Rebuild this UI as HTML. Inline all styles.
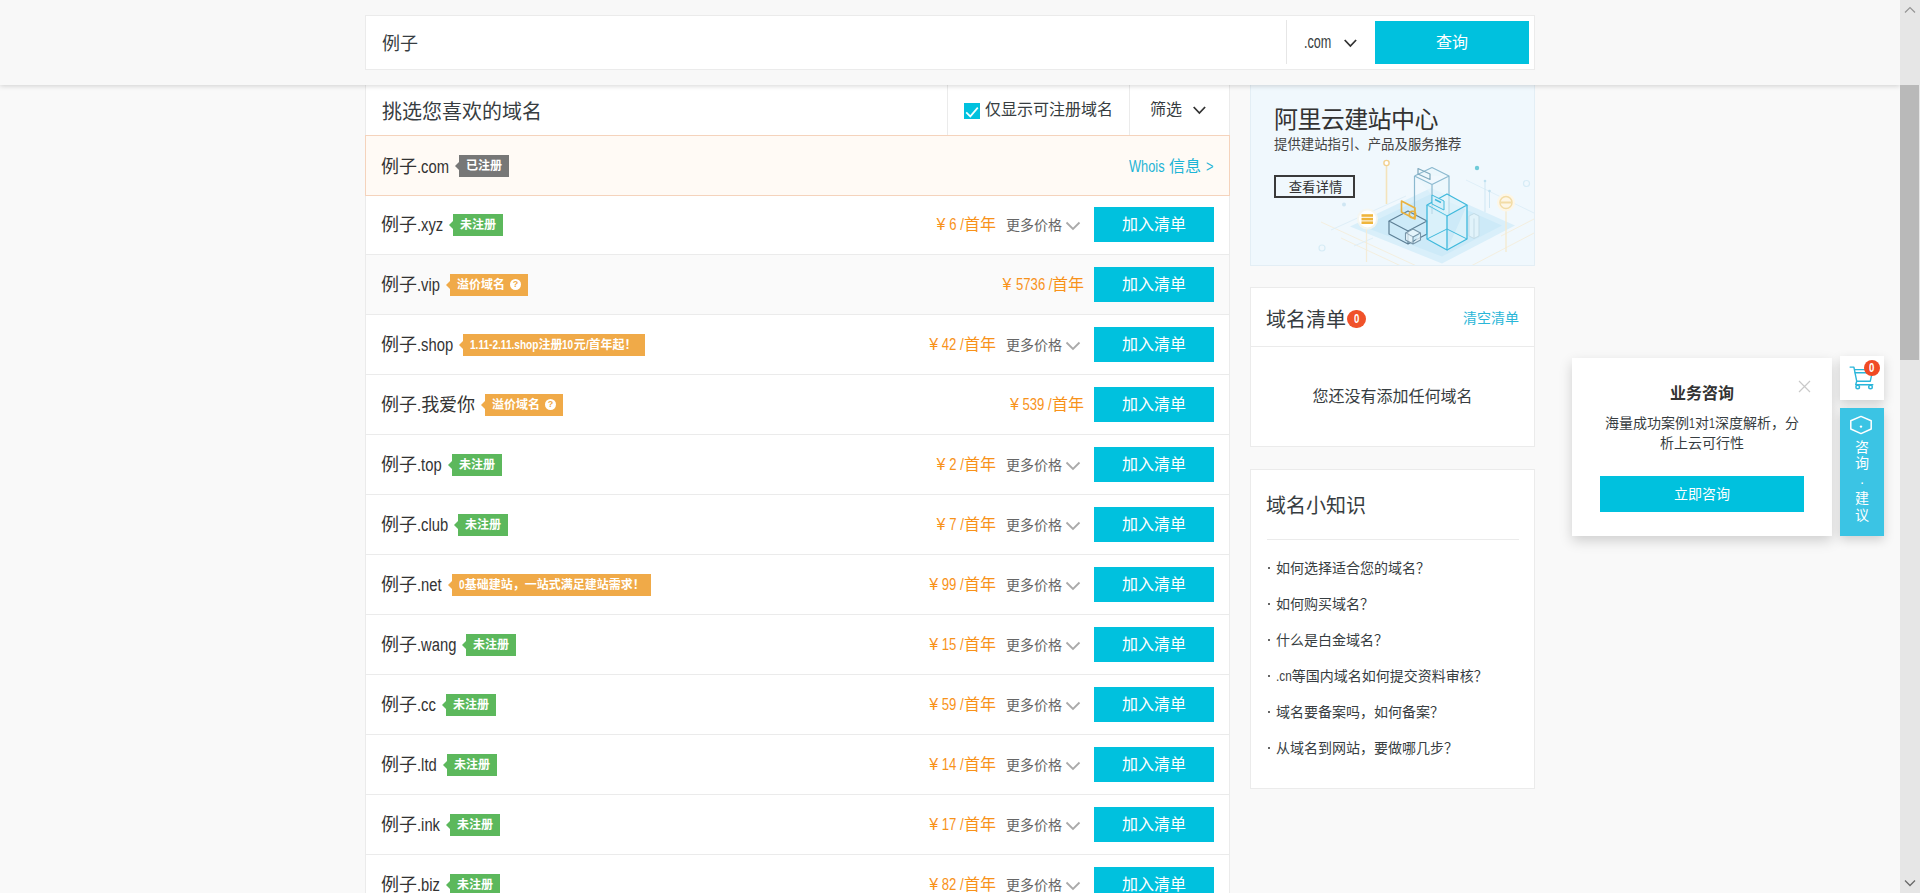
<!DOCTYPE html>
<html lang="zh-CN">
<head>
<meta charset="utf-8">
<title>域名查询</title>
<style>
*{box-sizing:border-box;margin:0;padding:0}
html,body{width:1920px;height:893px;overflow:hidden}
body{background:#f9f9f9;font-family:"Liberation Sans","Noto Sans CJK SC",sans-serif;color:#373d41;position:relative;font-size:14px}
.abs{position:absolute}
/* condensed latin helper */
.c{display:inline-block;transform:scaleX(.76);transform-origin:0 50%;white-space:nowrap}
.cr{display:inline-block;transform:scaleX(.76);transform-origin:100% 50%;white-space:nowrap}

/* header */
#hdr{position:absolute;left:0;top:0;width:1900px;height:85px;background:#f8f8f8;box-shadow:0 1px 5px rgba(0,0,0,.17);z-index:10}
#sbox{position:absolute;left:365px;top:15px;width:1170px;height:55px;background:#fff;border:1px solid #ebebeb}
#sbox .kw{position:absolute;left:16px;top:0;line-height:56px;font-size:18px;color:#373d41}
#sbox .div{position:absolute;left:920px;top:4px;width:1px;height:44px;background:#e6e6e6}
#sbox .tld{position:absolute;left:938px;top:0;line-height:53px;font-size:18px;color:#373d41}
#sbox .chev{position:absolute;left:978px;top:23px}
#sbox .btn{position:absolute;left:1009px;top:5px;width:154px;height:43px;background:#00c1de;color:#fff;font-size:16px;line-height:43px;text-align:center}

/* list panel */
#panel{position:absolute;left:365px;top:85px;width:865px;height:808px;background:#fff;border-left:1px solid #ebebeb;border-right:1px solid #ebebeb}
#phead{position:absolute;left:0;top:0;width:863px;height:50px}
#phead .t{position:absolute;left:16px;top:0;line-height:55px;font-size:20px;color:#373d41}
#phead .d1{position:absolute;left:581px;top:0;width:1px;height:50px;background:#ebebeb}
#phead .d2{position:absolute;left:763px;top:0;width:1px;height:50px;background:#ebebeb}
#phead .cb{position:absolute;left:598px;top:18px;width:16px;height:16px;background:#00c1de}
#phead .cbl{position:absolute;left:619px;top:0;line-height:49px;font-size:16px;color:#373d41}
#phead .flt{position:absolute;left:784px;top:0;line-height:49px;font-size:16px;color:#373d41}
#phead .chev{position:absolute;left:827px;top:21px}

.row{position:absolute;left:0;width:863px;height:60px;border-bottom:1px solid #ebebeb;background:#fff}
.row.hov{background:#fafafa}
.row.reg{left:-1px;width:865px;height:61px;background:#fffaf5;border:1px solid #f5d3bc;z-index:2}
.row .nm{position:absolute;left:15px;top:0;line-height:61px;font-size:18px;color:#333;white-space:nowrap}
.row.reg .nm{left:15px;line-height:63px}
.tag{position:absolute;top:19px;height:22px;line-height:22px;font-size:12px;font-weight:bold;color:#fff;white-space:nowrap;padding:0 7px}
.row.reg .tag{top:19px}
.tag:before{content:"";position:absolute;left:-4px;top:7px;border-style:solid;border-width:4px 4px 4px 0;border-color:transparent}
.tag.g{background:#5cb85c}.tag.g:before{border-right-color:#5cb85c}
.tag.o{background:#f0aa48}.tag.o:before{border-right-color:#f0aa48}
.tag.k{background:#777}.tag.k:before{border-right-color:#777}
.q{display:inline-block;width:11px;height:11px;border-radius:6px;background:#fff;color:#f0aa48;font-size:9px;line-height:11px;text-align:center;vertical-align:middle;margin:-2px 0 0 5px;font-weight:bold}
.pr{position:absolute;top:0;line-height:59px;font-size:16px;color:#f8921a;white-space:nowrap;text-align:right}
.pr.a{right:233px}
.pr.b{right:145px}
.more{position:absolute;left:640px;top:0;line-height:60px;font-size:14px;color:#666;white-space:nowrap}
.more svg{position:absolute;left:59px;top:26px}
.add{position:absolute;left:728px;top:12px;width:120px;height:35px;background:#00c1de;color:#fff;font-size:16px;line-height:35px;text-align:center}
.whois{position:absolute;right:16px;top:0;line-height:62px;font-size:16px;color:#1eb4d6;white-space:nowrap}

.pr .y{margin-right:4px}
/* sidebar */
.card{position:absolute;left:1250px;width:285px;background:#fff;border:1px solid #ebebeb}
#banner{position:absolute;left:1250px;top:85px;width:285px;height:181px;background:#f0f8fd;border:1px solid #e3eef5;border-top:0;overflow:hidden}
#banner .bt{position:absolute;left:23px;top:18px;font-size:24px;line-height:34px;color:#333;white-space:nowrap;letter-spacing:-.6px}
#banner .bs{position:absolute;left:23px;top:50px;font-size:13.4px;line-height:20px;color:#444;white-space:nowrap}
#banner .bb{position:absolute;left:23px;top:90px;width:81px;height:23px;border:2px solid #3a3a3a;font-size:13.4px;line-height:21px;text-align:center;color:#333;padding-left:2px}
.card .ct{position:absolute;left:15px;font-size:20px;line-height:30px;color:#373d41;white-space:nowrap}
#cart{top:287px;height:160px}
#cart .ct{top:17px}
#cart .badge{position:absolute;left:96px;top:22px;width:19px;height:18px;border-radius:9px;background:#f0522a;color:#fff;font-size:12px;font-weight:bold;line-height:18px;text-align:center}
#cart .clr{position:absolute;right:15px;top:20px;font-size:14px;line-height:20px;color:#29b6d8}
#cart .hr{position:absolute;left:0;top:58px;width:283px;height:1px;background:#ebebeb}
#cart .empty{position:absolute;left:0;top:96px;width:283px;text-align:center;font-size:16px;line-height:26px;color:#373d41}
#tips{top:469px;height:320px}
#tips .ct{top:21px}
#tips .hr{position:absolute;left:16px;top:69px;width:252px;height:1px;background:#ebebeb}
#tips ul{list-style:none}
#tips li{position:absolute;left:25px;font-size:14px;line-height:24px;color:#373d41;white-space:nowrap}
#tips li:before{content:"";position:absolute;left:-8px;top:11px;width:2px;height:2px;background:#666}
/* float */
#pop{position:absolute;left:1572px;top:358px;width:260px;height:178px;background:#fff;box-shadow:0 5px 12px rgba(0,0,0,.17);z-index:5}
#pop .pt{position:absolute;left:0;top:23px;width:260px;text-align:center;font-size:16px;font-weight:bold;line-height:26px;color:#333}
#pop .px{position:absolute;left:226px;top:22px}
#pop .pb{position:absolute;left:0;top:55px;width:260px;text-align:center;font-size:14px;line-height:20px;color:#373d41}
#pop .pbtn{position:absolute;left:28px;top:118px;width:204px;height:36px;background:#00c1de;color:#fff;font-size:14px;line-height:36px;text-align:center}
#cartbtn{position:absolute;left:1840px;top:356px;width:44px;height:44px;background:#fff;box-shadow:0 4px 10px rgba(0,0,0,.17);z-index:5}
#cartbtn .cbadge{position:absolute;left:24px;top:4px;width:16px;height:16px;border-radius:8px;background:#f04a24;color:#fff;font-size:12px;font-weight:bold;line-height:16px;text-align:center}
#tab{position:absolute;left:1840px;top:408px;width:44px;height:128px;background:#3bc4e4;box-shadow:0 4px 10px rgba(0,0,0,.17);z-index:5;color:#fff}
#tab span{position:absolute;left:0;width:44px;text-align:center;font-size:14px;line-height:20px}
/* scrollbar */
#sb{position:absolute;left:1900px;top:0;width:20px;height:893px;background:#e6e6e6;z-index:20}
#sb .th{position:absolute;left:0;top:85px;width:19px;height:275px;background:#b9b9b9}
</style>
</head>
<body>

<div id="hdr">
  <div id="sbox">
    <div class="kw">例子</div>
    <div class="div"></div>
    <div class="tld"><span class="c" style="transform:scaleX(0.7);margin-right:-11.70px">.com</span></div>
    <svg class="chev" width="14" height="9" viewBox="0 0 14 9"><path d="M.7 1 L6.4 7 L12.1 1" fill="none" stroke="#333" stroke-width="1.8"/></svg>
    <div class="btn">查询</div>
  </div>
</div>

<div id="panel">
  <div id="phead">
    <div class="t">挑选您喜欢的域名</div>
    <div class="d1"></div><div class="d2"></div>
    <div class="cb"><svg width="16" height="16" viewBox="0 0 16 16"><path d="M2.2 9.4 L6.3 13.4 L13.8 4.6" fill="none" stroke="#f2ffff" stroke-width="1.7"/></svg></div>
    <div class="cbl">仅显示可注册域名</div>
    <div class="flt">筛选</div>
    <svg class="chev" width="14" height="9" viewBox="0 0 14 9"><path d="M.7 1 L6.4 7 L12.1 1" fill="none" stroke="#333" stroke-width="1.8"/></svg>
  </div>
  <div class="row reg" style="top:50px"><div class="nm">例子<span class="c" style="transform:scaleX(0.82);margin-right:-7.02px">.com</span></div><div class="tag k" style="left:93px;width:50px">已注册</div><div class="whois"><span class="c" style="transform:scaleX(0.8);margin-right:-8.89px">Whois</span> 信息 <span class="c" style="transform:scaleX(0.8);margin-right:-1.87px">&gt;</span></div></div>
  <div class="row" style="top:110px"><div class="nm">例子<span class="c" style="transform:scaleX(0.82);margin-right:-5.76px">.xyz</span></div><div class="tag g" style="left:87px;width:50px">未注册</div><div class="pr a"><span class="y">¥</span><span class="cr" style="transform:scaleX(0.82);margin-left:-3.20px">6 /</span>首年</div><div class="more">更多价格<svg width="16" height="10" viewBox="0 0 16 10"><path d="M1.5 1.5 L8 8 L14.5 1.5" fill="none" stroke="#aaa" stroke-width="1.8"/></svg></div><div class="add">加入清单</div></div>
  <div class="row hov" style="top:170px"><div class="nm">例子<span class="c" style="transform:scaleX(0.82);margin-right:-5.04px">.vip</span></div><div class="tag o" style="left:84px;width:78px">溢价域名<span class="q">?</span></div><div class="pr b"><span class="y">¥</span><span class="cr" style="transform:scaleX(0.82);margin-left:-8.01px">5736 /</span>首年</div><div class="add">加入清单</div></div>
  <div class="row" style="top:230px"><div class="nm">例子<span class="c" style="transform:scaleX(0.82);margin-right:-7.93px">.shop</span></div><div class="tag o" style="left:97px;width:182px"><span class="c" style="transform:scaleX(0.84);margin-right:-13.02px">1.11-2.11.shop</span>注册<span class="c" style="transform:scaleX(0.84);margin-right:-2.14px">10</span>元<span class="c" style="transform:scaleX(0.84);margin-right:-0.53px">/</span>首年起！</div><div class="pr a"><span class="y">¥</span><span class="cr" style="transform:scaleX(0.82);margin-left:-4.80px">42 /</span>首年</div><div class="more">更多价格<svg width="16" height="10" viewBox="0 0 16 10"><path d="M1.5 1.5 L8 8 L14.5 1.5" fill="none" stroke="#aaa" stroke-width="1.8"/></svg></div><div class="add">加入清单</div></div>
  <div class="row" style="top:290px"><div class="nm">例子<span class="c" style="transform:scaleX(0.82);margin-right:-0.90px">.</span>我爱你</div><div class="tag o" style="left:119px;width:78px">溢价域名<span class="q">?</span></div><div class="pr b"><span class="y">¥</span><span class="cr" style="transform:scaleX(0.82);margin-left:-6.41px">539 /</span>首年</div><div class="add">加入清单</div></div>
  <div class="row" style="top:350px"><div class="nm">例子<span class="c" style="transform:scaleX(0.82);margin-right:-5.40px">.top</span></div><div class="tag g" style="left:86px;width:50px">未注册</div><div class="pr a"><span class="y">¥</span><span class="cr" style="transform:scaleX(0.82);margin-left:-3.20px">2 /</span>首年</div><div class="more">更多价格<svg width="16" height="10" viewBox="0 0 16 10"><path d="M1.5 1.5 L8 8 L14.5 1.5" fill="none" stroke="#aaa" stroke-width="1.8"/></svg></div><div class="add">加入清单</div></div>
  <div class="row" style="top:410px"><div class="nm">例子<span class="c" style="transform:scaleX(0.82);margin-right:-6.84px">.club</span></div><div class="tag g" style="left:92px;width:50px">未注册</div><div class="pr a"><span class="y">¥</span><span class="cr" style="transform:scaleX(0.82);margin-left:-3.20px">7 /</span>首年</div><div class="more">更多价格<svg width="16" height="10" viewBox="0 0 16 10"><path d="M1.5 1.5 L8 8 L14.5 1.5" fill="none" stroke="#aaa" stroke-width="1.8"/></svg></div><div class="add">加入清单</div></div>
  <div class="row" style="top:470px"><div class="nm">例子<span class="c" style="transform:scaleX(0.82);margin-right:-5.40px">.net</span></div><div class="tag o" style="left:86px;width:199px"><span class="c" style="transform:scaleX(0.84);margin-right:-1.07px">0</span>基础建站，一站式满足建站需求！</div><div class="pr a"><span class="y">¥</span><span class="cr" style="transform:scaleX(0.82);margin-left:-4.80px">99 /</span>首年</div><div class="more">更多价格<svg width="16" height="10" viewBox="0 0 16 10"><path d="M1.5 1.5 L8 8 L14.5 1.5" fill="none" stroke="#aaa" stroke-width="1.8"/></svg></div><div class="add">加入清单</div></div>
  <div class="row" style="top:530px"><div class="nm">例子<span class="c" style="transform:scaleX(0.82);margin-right:-8.65px">.wang</span></div><div class="tag g" style="left:100px;width:50px">未注册</div><div class="pr a"><span class="y">¥</span><span class="cr" style="transform:scaleX(0.82);margin-left:-4.80px">15 /</span>首年</div><div class="more">更多价格<svg width="16" height="10" viewBox="0 0 16 10"><path d="M1.5 1.5 L8 8 L14.5 1.5" fill="none" stroke="#aaa" stroke-width="1.8"/></svg></div><div class="add">加入清单</div></div>
  <div class="row" style="top:590px"><div class="nm">例子<span class="c" style="transform:scaleX(0.82);margin-right:-4.14px">.cc</span></div><div class="tag g" style="left:80px;width:50px">未注册</div><div class="pr a"><span class="y">¥</span><span class="cr" style="transform:scaleX(0.82);margin-left:-4.80px">59 /</span>首年</div><div class="more">更多价格<svg width="16" height="10" viewBox="0 0 16 10"><path d="M1.5 1.5 L8 8 L14.5 1.5" fill="none" stroke="#aaa" stroke-width="1.8"/></svg></div><div class="add">加入清单</div></div>
  <div class="row" style="top:650px"><div class="nm">例子<span class="c" style="transform:scaleX(0.82);margin-right:-4.32px">.ltd</span></div><div class="tag g" style="left:81px;width:50px">未注册</div><div class="pr a"><span class="y">¥</span><span class="cr" style="transform:scaleX(0.82);margin-left:-4.80px">14 /</span>首年</div><div class="more">更多价格<svg width="16" height="10" viewBox="0 0 16 10"><path d="M1.5 1.5 L8 8 L14.5 1.5" fill="none" stroke="#aaa" stroke-width="1.8"/></svg></div><div class="add">加入清单</div></div>
  <div class="row" style="top:710px"><div class="nm">例子<span class="c" style="transform:scaleX(0.82);margin-right:-5.04px">.ink</span></div><div class="tag g" style="left:84px;width:50px">未注册</div><div class="pr a"><span class="y">¥</span><span class="cr" style="transform:scaleX(0.82);margin-left:-4.80px">17 /</span>首年</div><div class="more">更多价格<svg width="16" height="10" viewBox="0 0 16 10"><path d="M1.5 1.5 L8 8 L14.5 1.5" fill="none" stroke="#aaa" stroke-width="1.8"/></svg></div><div class="add">加入清单</div></div>
  <div class="row" style="top:770px"><div class="nm">例子<span class="c" style="transform:scaleX(0.82);margin-right:-5.04px">.biz</span></div><div class="tag g" style="left:84px;width:50px">未注册</div><div class="pr a"><span class="y">¥</span><span class="cr" style="transform:scaleX(0.82);margin-left:-4.80px">82 /</span>首年</div><div class="more">更多价格<svg width="16" height="10" viewBox="0 0 16 10"><path d="M1.5 1.5 L8 8 L14.5 1.5" fill="none" stroke="#aaa" stroke-width="1.8"/></svg></div><div class="add">加入清单</div></div>
</div>

<div id="banner">
  <svg class="abs" style="left:0;top:0" width="285" height="181" viewBox="1250 85 285 181">
    <defs>
      <radialGradient id="glow" cx="50%" cy="50%" r="50%"><stop offset="0" stop-color="#bfe6f6" stop-opacity=".95"/><stop offset=".7" stop-color="#cdebf8" stop-opacity=".8"/><stop offset="1" stop-color="#dff2fb" stop-opacity=".2"/></radialGradient>
    </defs>
    <!-- faint grid lines -->
    <g stroke="#f6ecd6" stroke-width="1" fill="none" opacity=".75">
      <path d="M1320 222 L1420 268"/><path d="M1340 238 L1400 266"/><path d="M1535 232 L1470 266"/><path d="M1535 218 L1500 236"/>
    </g>
    <g stroke="#dfeff8" stroke-width="1" fill="none">
      <path d="M1330 230 L1405 196"/><path d="M1465 180 L1535 214"/><path d="M1353 246 L1372 238"/>
    </g>
    <!-- platform -->
    <path d="M1349 226.5 L1430 188 L1514 225.5 L1441 263.5 Z" fill="#d9effa"/>
    <path d="M1362 226.5 L1430 194 L1501 225.5 L1441 256.5 Z" fill="#cdeaf8"/>
    <!-- orange pin -->
    <path d="M1385.5 166 V204" stroke="#f4e3bb" stroke-width="1.6" fill="none"/>
    <circle cx="1385.5" cy="163" r="2.6" fill="#fff" stroke="#f2d190" stroke-width="1.4"/>
    <path d="M1365.5 229 V262" stroke="#f4ecd8" stroke-width="1.2" fill="none"/>
    <!-- back tall building -->
    <g fill="none" stroke="#8bb9cf" stroke-width="1.2" stroke-linejoin="round">
      <path d="M1413.5 176 L1431 167.5 L1448 176 L1448 214 M1413.5 176 L1413.5 214 M1413.5 176 L1431 184.5 L1448 176 M1431 184.5 V214" fill="#e9f5fb" fill-opacity=".55"/>
      <path d="M1417 168.5 L1429 174 L1429 179.5 L1417 174 Z" stroke="#7fa9bd"/>
    </g>
    <!-- left low box -->
    <g fill="none" stroke="#5d7f95" stroke-width="1.2" stroke-linejoin="round">
      <path d="M1388 221 L1407 211 L1426 221 L1407 231 Z"/>
      <path d="M1388 221 V234 L1407 244 V231 M1407 244 L1426 234 V221"/>
    </g>
    <!-- small cube -->
    <g fill="#eef8fc" fill-opacity=".7" stroke="#7795a8" stroke-width="1.1" stroke-linejoin="round">
      <path d="M1404.5 233 L1412 229 L1419.5 233 L1412 237 Z"/>
      <path d="M1404.5 233 V240 L1412 244 V237 M1412 244 L1419.5 240 V233"/>
    </g>
    <!-- orange folder icon -->
    <g fill="none" stroke="#e9b23f" stroke-width="1.6" stroke-linejoin="round">
      <path d="M1400.5 201 L1414 208 V219 L1400.5 212 Z"/>
      <circle cx="1411.5" cy="214.5" r="3.2"/>
    </g>
    <!-- front tall building -->
    <g fill="#e6f6fc" fill-opacity=".55" stroke="#3fb9dc" stroke-width="1.3" stroke-linejoin="round">
      <path d="M1426 205 L1446 194 L1466 205 L1446 216 Z"/>
      <path d="M1426 205 V239 L1446 250 V216"/>
      <path d="M1446 250 L1466 239 V205"/>
      <path d="M1426 239 L1446 229 L1466 239" fill="none" stroke-width="1"/>
    </g>
    <path d="M1431 195 L1443 201 V210 L1431 204 Z" fill="#d8f0fa" stroke="#3fb9dc" stroke-width="1"/>
    <path d="M1434 199.5 L1440 202.5" stroke="#3fb9dc" stroke-width="1.4"/>
    <!-- right small pale tower -->
    <path d="M1468 216 L1473 213.5 L1478 216 V236 L1473 238.5 L1468 236 Z M1473 218.5 V238.5" fill="#eef8fc" fill-opacity=".6" stroke="#c3dbe6" stroke-width="1"/>
    <!-- left circle icon -->
    <circle cx="1366.5" cy="219" r="10.5" fill="#f8f6ee" opacity=".8"/>
    <circle cx="1366.5" cy="219" r="8.5" fill="#fff"/>
    <g fill="#efb53c"><rect x="1360.5" y="214.2" width="11.5" height="2.6"/><rect x="1360.5" y="217.8" width="11.5" height="2.6"/><rect x="1360.5" y="221.4" width="11.5" height="2.6"/></g>
    <!-- right circle icon -->
    <path d="M1505 211 V252" stroke="#f5ead0" stroke-width="1.3"/>
    <circle cx="1505" cy="202.5" r="9" fill="#fdf6e6"/>
    <circle cx="1505" cy="202.5" r="6" fill="none" stroke="#f2dca6" stroke-width="1.5"/>
    <path d="M1499.5 202.5 H1510.5" stroke="#f2dca6" stroke-width="2"/>
    <!-- dots -->
    <circle cx="1476" cy="168" r="2.2" fill="#6fcbd9"/>
    <circle cx="1525.5" cy="183.5" r="3" fill="none" stroke="#d7ecf6" stroke-width="1.2"/>
    <circle cx="1343" cy="204.5" r="2" fill="#cfe6f3"/>
    <circle cx="1321" cy="248" r="3" fill="none" stroke="#d7ecf6" stroke-width="1.2"/>
    <path d="M1484 182 V212 M1488.5 192 V208" stroke="#cfe6f3" stroke-width="1"/>
    <circle cx="1484" cy="181" r="1.3" fill="#bfe0ef"/><circle cx="1488.5" cy="191" r="1.3" fill="#bfe0ef"/>
  </svg>
  <div class="bt">阿里云建站中心</div>
  <div class="bs">提供建站指引、产品及服务推荐</div>
  <div class="bb">查看详情</div>
</div>

<div class="card" id="cart">
  <div class="ct">域名清单</div>
  <div class="badge"><span class="c" style="transform:scaleX(0.8);margin-right:-1.33px">0</span></div>
  <div class="clr">清空清单</div>
  <div class="hr"></div>
  <div class="empty">您还没有添加任何域名</div>
</div>

<div class="card" id="tips">
  <div class="ct">域名小知识</div>
  <div class="hr"></div>
  <ul>
    <li style="top:86px">如何选择适合您的域名？</li>
    <li style="top:122px">如何购买域名？</li>
    <li style="top:158px">什么是白金域名？</li>
    <li style="top:194px"><span class="c" style="transform:scaleX(0.84);margin-right:-2.99px">.cn</span>等国内域名如何提交资料审核？</li>
    <li style="top:230px">域名要备案吗，如何备案？</li>
    <li style="top:266px">从域名到网站，要做哪几步？</li>
  </ul>
</div>


<div id="pop">
  <div class="pt">业务咨询</div>
  <svg class="px" width="13" height="13" viewBox="0 0 13 13"><path d="M1 1 L12 12 M12 1 L1 12" stroke="#c9c9c9" stroke-width="1.2" fill="none"/></svg>
  <div class="pb">海量成功案例<span class="c" style="transform:scaleX(0.76);margin-right:-1.87px">1</span>对<span class="c" style="transform:scaleX(0.76);margin-right:-1.87px">1</span>深度解析，分<br>析上云可行性</div>
  <div class="pbtn">立即咨询</div>
</div>
<div id="cartbtn">
  <svg class="abs" style="left:9px;top:8px" width="26" height="26" viewBox="0 0 26 26" fill="none" stroke="#2bb6da" stroke-width="1.4" stroke-linecap="round" stroke-linejoin="round">
    <path d="M1.1 3.1 H4.9 L7.7 17.2 H21.3 L23.8 5.6 H5.6"/>
    <path d="M6.1 8.7 H23"/>
    <path d="M7.7 17.2 L6.7 20.8 H23.8"/>
    <circle cx="8.7" cy="23" r="1.8"/><circle cx="21.5" cy="23" r="1.8"/>
  </svg>
  <div class="cbadge"><span class="c" style="transform:scaleX(0.8);margin-right:-1.33px">0</span></div>
</div>
<div id="tab">
  <svg class="abs" style="left:8.8px;top:6.8px" width="24" height="20" viewBox="0 0 24 20" fill="none" stroke="#fff" stroke-width="1.5" stroke-linejoin="round">
    <path d="M12 1.4 L22.2 5.8 V14 L12 18.6 L1.8 14 V5.8 Z"/><circle cx="12" cy="11.6" r="1.2" fill="#fff" stroke="none"/>
  </svg>
  <span style="top:29px">咨</span><span style="top:45px">询</span><span style="top:64px">·</span><span style="top:80px">建</span><span style="top:97px">议</span>
</div>


<div id="sb">
  <div class="th"></div>
  <svg class="abs" style="left:4px;top:6px" width="12" height="8" viewBox="0 0 12 8"><path d="M1 6.5 L6 1.5 L11 6.5" fill="none" stroke="#959595" stroke-width="1.2"/></svg>
  <svg class="abs" style="left:4px;top:879px" width="12" height="8" viewBox="0 0 12 8"><path d="M1 1.5 L6 6.5 L11 1.5" fill="none" stroke="#6a6a6a" stroke-width="1.3"/></svg>
</div>


</body>
</html>
